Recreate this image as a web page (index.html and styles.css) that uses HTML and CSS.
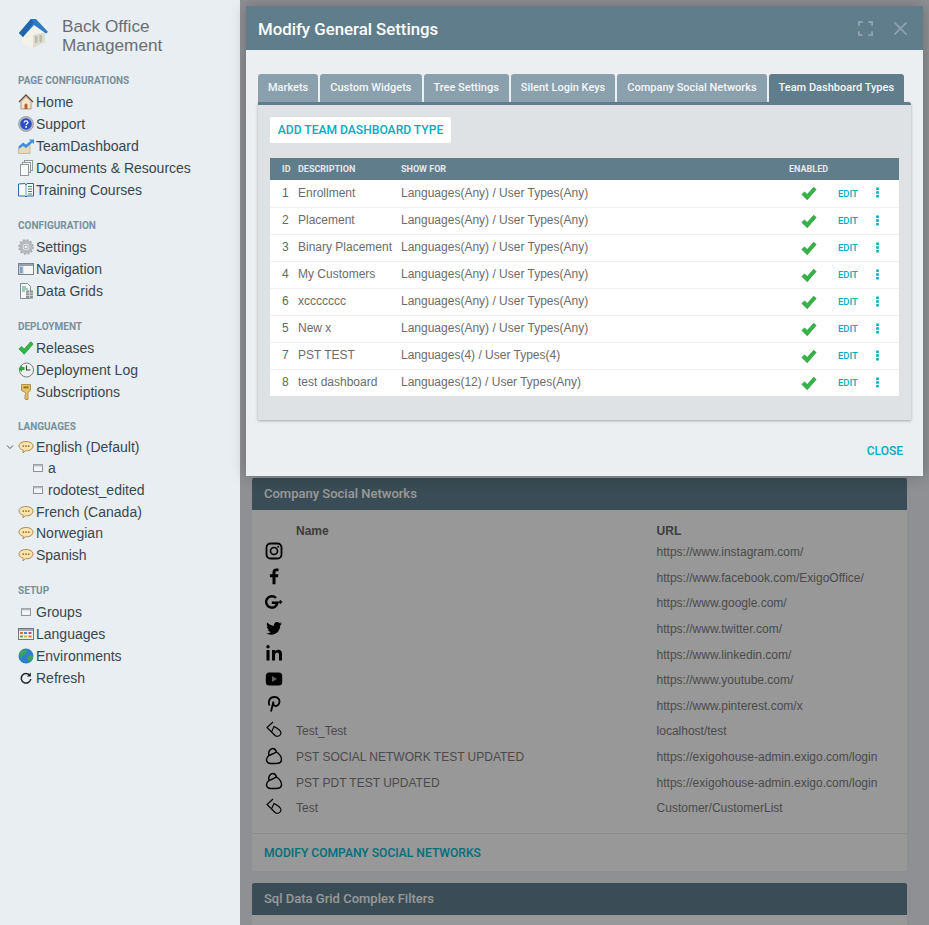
FILE: index.html
```html
<!DOCTYPE html>
<html lang="en">
<head>
<meta charset="utf-8">
<title>Modify General Settings</title>
<link rel="stylesheet" href="styles.css">
</head>
<body>
<svg class="sprite" aria-hidden="true">
  <symbol id="check" viewBox="0 0 18 16"><path d="M1 9 4 6.200l3 3L14.300 1 17 3.500 7 15z" fill="#35b545" stroke="#25963a" stroke-width=".8"/></symbol>
  <symbol id="dots" viewBox="0 0 3 11"><rect x=".2" y=".5" width="2.600" height="2.600" fill="#00acc1"/><rect x=".2" y="4.200" width="2.600" height="2.600" fill="#00acc1"/><rect x=".2" y="7.900" width="2.600" height="2.600" fill="#00acc1"/></symbol>
  <symbol id="bubble" viewBox="0 0 16 16"><path d="M8 2.500c4 0 7 1.900 7 4.600S12 11.800 8.500 11.800c-.4 0-.8 0-1.200-.1L5 14l.2-2.800C2.800 10.500 1 9 1 7.100 1 4.400 4 2.500 8 2.500z" fill="#fbe3ae" stroke="#b08a4a"/><circle cx="5.300" cy="7.100" r=".9" fill="#8b6a30"/><circle cx="8" cy="7.100" r=".9" fill="#8b6a30"/><circle cx="10.700" cy="7.100" r=".9" fill="#8b6a30"/></symbol>
  <symbol id="box" viewBox="0 0 10 10"><rect x=".5" y="1.500" width="9" height="7" fill="#f3f4f5" stroke="#8d9296"/><rect x=".5" y="1.500" width="9" height="1.800" fill="#b4b8bb"/></symbol>
  <symbol id="clip" viewBox="0 0 18 18"><path d="M8 1 2 6.500l8 8c2 1.500 6 .5 6-2.500C16 10 12 7 9 5.500L6.500 11" fill="none" stroke="#000" stroke-width="1.100"/></symbol>
  <symbol id="cloud" viewBox="0 0 18 18"><path d="M4 8.500C3 5 5 1.500 7.800 1.500c2 0 3.200 1.800 3.600 3.500 2.800 1.800 5.100 4.500 5.100 7.500 0 3-2.500 4-5.500 4H6C3 16.500 1.500 15 1.500 12.800c0-1.800 1-3.300 2.500-4.300zm0 0c2.500-1 5-2 7.400-3.500" fill="none" stroke="#000" stroke-width="1.400"/></symbol>
</svg>

<aside class="sidebar">
  <div class="brand">
    <svg class="brand-logo" viewBox="0 0 30 30"><path d="M3 15 14 5l12 9v10l-12 6-11-5z" fill="#f3f2e8"/><path d="M14 30l12-6V14l-12 3z" fill="#dddccf"/><rect x="16" y="18" width="2.500" height="7" fill="#b9b9ac"/><rect x="20.500" y="17" width="2.500" height="7" fill="#b9b9ac"/><path d="M0 15 12 1h5l12 13-2 1.500L15 7 4 19z" fill="#2b7cc4"/><path d="M0 15 12 1l3 3L4 19z" fill="#1f66ab"/></svg>
    <div class="brand-name">Back Office<br>Management</div>
  </div>

  <section class="nav-group">
    <h2 class="nav-label">PAGE CONFIGURATIONS</h2>
    <div class="nav-item"><svg class="nav-icon" viewBox="0 0 16 16"><path d="M1 8 8 1l7 7" fill="none" stroke="#6b4a34" stroke-width="1.300"/><path d="M3 7.500 8 2.500l5 5V15H3z" fill="#f6e3cb" stroke="#8d765f" stroke-width=".7"/><path d="M6.500 15v-4a1.500 1.500 0 0 1 3 0v4z" fill="#b3622b"/></svg>Home</div>
    <div class="nav-item"><svg class="nav-icon" viewBox="0 0 16 16"><circle cx="8" cy="8" r="7.500" fill="#b7bcc2" stroke="#7d838a" stroke-width=".6"/><circle cx="8" cy="8" r="5.800" fill="#2a4fc4"/><path d="M6.200 6.500c0-1 .8-1.600 1.800-1.600s1.900.6 1.900 1.600c0 1.300-1.800 1.400-1.800 2.700" fill="none" stroke="#fff" stroke-width="1.300"/><circle cx="8.100" cy="11" r=".9" fill="#fff"/></svg>Support</div>
    <div class="nav-item"><svg class="nav-icon" viewBox="0 0 16 16"><path d="M.5 11 5 7l3 2 4-3v9.500H.5z" fill="#e7d9bc" stroke="#a8946f" stroke-width=".5"/><path d="M.5 11V8.500L5 4.500l3 2L12.500 3 11 1.500h5V6l-1.500-1.500L8 10 5 8z" fill="#3f8fdc"/></svg>TeamDashboard</div>
    <div class="nav-item"><svg class="nav-icon" viewBox="0 0 16 16"><rect x="6.500" y=".5" width="8" height="10" fill="#f4f6f6" stroke="#8e9a9a"/><rect x="4.500" y="2.500" width="8" height="10" fill="#f4f6f6" stroke="#8e9a9a"/><rect x="2.500" y="4.500" width="8" height="11" fill="#fafbfb" stroke="#8e9a9a"/></svg>Documents &amp; Resources</div>
    <div class="nav-item"><svg class="nav-icon" viewBox="0 0 16 16"><path d="M.5 2 7 1.500 8 3l1-1.500h6.500V14H9l-1 1-1-1H.5z" fill="#f7fafc" stroke="#2a68a8"/><path d="M8 3v11" stroke="#6ea0c8"/><path d="M10 4.500h4M10 7h4M10 9.500h4M10 12h4" stroke="#3c8a58"/></svg>Training Courses</div>
  </section>

  <section class="nav-group">
    <h2 class="nav-label">CONFIGURATION</h2>
    <div class="nav-item"><svg class="nav-icon" viewBox="0 0 16 16"><circle cx="8" cy="8" r="5" fill="none" stroke="#b8bbbd" stroke-width="3.600"/><circle cx="8" cy="8" r="7" fill="none" stroke="#a8abad" stroke-width="1.600" stroke-dasharray="2 1.700"/><circle cx="8" cy="8" r="2" fill="#f2f2f2" stroke="#777" stroke-width=".6"/></svg>Settings</div>
    <div class="nav-item"><svg class="nav-icon" viewBox="0 0 16 16"><rect x=".5" y="2.500" width="15" height="11" fill="#f4f4f4" stroke="#7c8288"/><rect x="1" y="3" width="14" height="2" fill="#9aa1a8"/><rect x="1" y="5" width="4.500" height="8" fill="#bcd0e6"/><path d="M2 7h2.500M2 9h2.500M2 11h2.500" stroke="#466f9c"/></svg>Navigation</div>
    <div class="nav-item"><svg class="nav-icon" viewBox="0 0 16 16"><path d="M2.500.5h7l3 3v12h-10z" fill="#f6f8f8" stroke="#7d9090"/><path d="M4 4h4M4 6h6M4 8h3" stroke="#4e9a7a"/><rect x="8" y="7.500" width="7" height="8" fill="#8c9296"/><path d="M8 10h7M8 12.500h7M11.500 7.500v8" stroke="#e6e8e8" stroke-width=".7"/></svg>Data Grids</div>
  </section>

  <section class="nav-group">
    <h2 class="nav-label">DEPLOYMENT</h2>
    <div class="nav-item"><svg class="nav-icon"><use href="#check"/></svg>Releases</div>
    <div class="nav-item"><svg class="nav-icon" viewBox="0 0 16 16"><circle cx="8.500" cy="8" r="7" fill="#eef0ee" stroke="#777d80"/><path d="M8.500 3.500V8h4" fill="none" stroke="#444" stroke-width="1.100"/><path d="M.5 7 4 3v2h2.500v3H4v2z" fill="#2fa83e"/></svg>Deployment Log</div>
    <div class="nav-item"><svg class="nav-icon" viewBox="0 0 16 16"><path d="M3.500.5h9v6l-2.500 2v7H7.500l-1-1.500 1-1-1-1 1-1V8.500l-4-2z" fill="#e6bf62" stroke="#a5842e" stroke-width=".8"/><rect x="5.500" y="2.500" width="5" height="1.800" fill="#8d6f24"/></svg>Subscriptions</div>
  </section>

  <section class="nav-group nav-tree">
    <h2 class="nav-label">LANGUAGES</h2>
    <div class="nav-item"><svg class="chevron" viewBox="0 0 8 6"><path d="M1 1.500 4 4.500l3-3" fill="none" stroke="#555" stroke-width="1"/></svg><svg class="nav-icon"><use href="#bubble"/></svg>English (Default)</div>
    <div class="nav-item nav-sub"><svg class="sub-icon"><use href="#box"/></svg>a</div>
    <div class="nav-item nav-sub"><svg class="sub-icon"><use href="#box"/></svg>rodotest_edited</div>
    <div class="nav-item"><svg class="nav-icon"><use href="#bubble"/></svg>French (Canada)</div>
    <div class="nav-item"><svg class="nav-icon"><use href="#bubble"/></svg>Norwegian</div>
    <div class="nav-item"><svg class="nav-icon"><use href="#bubble"/></svg>Spanish</div>
  </section>

  <section class="nav-group">
    <h2 class="nav-label">SETUP</h2>
    <div class="nav-item"><svg class="nav-icon groups-icon"><use href="#box"/></svg>Groups</div>
    <div class="nav-item"><svg class="nav-icon" viewBox="0 0 16 16"><rect x=".5" y="2.500" width="15" height="11" fill="#f2f0ea" stroke="#70767c"/><rect x="1" y="3" width="14" height="2" fill="#a5aab0"/><rect x="2" y="6" width="3" height="2" fill="#d9773a"/><rect x="6" y="6" width="3" height="2" fill="#4a86c8"/><rect x="10.500" y="6" width="3" height="2" fill="#c84a8e"/><rect x="2" y="9.500" width="3" height="2" fill="#5fa84a"/><rect x="6" y="9.500" width="3" height="2" fill="#d8b83a"/><rect x="10.500" y="9.500" width="3" height="2" fill="#d9773a"/></svg>Languages</div>
    <div class="nav-item"><svg class="nav-icon" viewBox="0 0 16 16"><circle cx="8" cy="8" r="7.500" fill="#2c7fc8"/><path d="M3 3c2-1 5-1.500 6 0s-1 2-2 3-3 1-3 3-2 0-2.500-1S2 4 3 3zM10 8c2-1 4-1 5 0 0 3-2 5-4 6-1-2-2-4-1-6z" fill="#3fa45a"/></svg>Environments</div>
    <div class="nav-item"><svg class="nav-icon" viewBox="0 0 16 16"><path d="M12 5.500A4.800 4.800 0 1 0 12.800 9" fill="none" stroke="#222" stroke-width="1.500"/><path d="M12.800 2.500v4h-4z" fill="#222"/></svg>Refresh</div>
  </section>
</aside>

<main class="content">
  <article class="card">
    <h3 class="card-title">Company Social Networks</h3>
    <div class="card-body">
      <table class="social">
        <thead><tr><th class="social-icon-cell"></th><th class="social-name">Name</th><th>URL</th></tr></thead>
        <tbody>
          <tr><td class="social-icon-cell"><svg class="social-icon" viewBox="0 0 18 18"><rect x="1.500" y="1.500" width="15" height="15" rx="4" fill="none" stroke="#000" stroke-width="1.800"/><circle cx="9" cy="9" r="3.500" fill="none" stroke="#000" stroke-width="1.600"/><circle cx="13.200" cy="4.800" r="1" fill="#000"/></svg></td><td></td><td>https://www.instagram.com/</td></tr>
          <tr><td class="social-icon-cell"><svg class="social-icon" viewBox="0 0 24 24"><path d="M14 23V13.500h3.300l.5-3.800H14V7.300c0-1.100.4-1.800 1.900-1.800H18V2.100c-.4 0-1.600-.1-3-.1-3 0-5 1.800-5 5.100v2.600H6.600v3.800H10V23z"/></svg></td><td></td><td>https://www.facebook.com/ExigoOffice/</td></tr>
          <tr><td class="social-icon-cell"><svg class="social-icon" viewBox="0 0 18 18"><path d="M11 5A5.700 5.700 0 1 0 12.500 9.800H6.800" fill="none" stroke="#000" stroke-width="2.400"/><path d="M15.500 7.300v3.400M13.800 9h3.400" stroke="#000" stroke-width="1.500"/></svg></td><td></td><td>https://www.google.com/</td></tr>
          <tr><td class="social-icon-cell"><svg class="social-icon" viewBox="0 0 24 24"><path d="M22.460,6C21.690,6.350 20.860,6.580 20,6.690C20.880,6.160 21.560,5.320 21.880,4.310C21.050,4.810 20.130,5.160 19.160,5.360C18.370,4.500 17.260,4 16,4C13.650,4 11.730,5.920 11.730,8.290C11.730,8.630 11.770,8.960 11.840,9.270C8.280,9.090 5.110,7.380 3,4.790C2.630,5.420 2.420,6.160 2.420,6.940C2.420,8.430 3.170,9.750 4.330,10.500C3.620,10.500 2.960,10.300 2.380,10C2.380,10 2.380,10 2.380,10.030C2.380,12.110 3.860,13.850 5.820,14.240C5.460,14.340 5.080,14.390 4.690,14.390C4.420,14.390 4.150,14.360 3.890,14.310C4.430,16 6,17.260 7.890,17.290C6.430,18.450 4.580,19.130 2.560,19.130C2.220,19.130 1.880,19.110 1.540,19.070C3.440,20.290 5.700,21 8.120,21C16,21 20.330,14.460 20.330,8.790C20.330,8.600 20.330,8.420 20.320,8.230C21.160,7.630 21.880,6.870 22.460,6Z"/></svg></td><td></td><td>https://www.twitter.com/</td></tr>
          <tr><td class="social-icon-cell"><svg class="social-icon" viewBox="0 0 18 18"><circle cx="3" cy="2.800" r="1.700"/><rect x="1.500" y="6" width="3" height="10.500"/><path d="M7 6h2.900v1.500C10.500 6.500 11.700 5.800 13.200 5.800c2.900 0 3.800 1.800 3.800 4.600v6.100h-3v-5.600c0-1.400-.4-2.300-1.700-2.300S10 9.600 10 11v5.500H7z"/></svg></td><td></td><td>https://www.linkedin.com/</td></tr>
          <tr><td class="social-icon-cell"><svg class="social-icon" viewBox="0 0 18 18"><rect x=".8" y="2.500" width="16.400" height="13" rx="3.500"/><path d="M7 6v6l5-3z" fill="#989898"/></svg></td><td></td><td>https://www.youtube.com/</td></tr>
          <tr><td class="social-icon-cell"><svg class="social-icon" viewBox="0 0 18 18"><path d="M4.500 10.500C3 8 3.500 2 9.500 2c3.800 0 5.200 2.500 5 4.800-.2 2.500-2 4.500-4.200 4.200-1.500-.2-2.300-1.500-1.900-3.500M8.500 6.500 6 16.500" fill="none" stroke="#000" stroke-width="1.800"/></svg></td><td></td><td>https://www.pinterest.com/x</td></tr>
          <tr><td class="social-icon-cell"><svg class="social-icon"><use href="#clip"/></svg></td><td>Test_Test</td><td>localhost/test</td></tr>
          <tr><td class="social-icon-cell"><svg class="social-icon"><use href="#cloud"/></svg></td><td>PST SOCIAL NETWORK TEST UPDATED</td><td>https://exigohouse-admin.exigo.com/login</td></tr>
          <tr><td class="social-icon-cell"><svg class="social-icon"><use href="#cloud"/></svg></td><td>PST PDT TEST UPDATED</td><td>https://exigohouse-admin.exigo.com/login</td></tr>
          <tr><td class="social-icon-cell"><svg class="social-icon"><use href="#clip"/></svg></td><td>Test</td><td>Customer/CustomerList</td></tr>
        </tbody>
      </table>
    </div>
    <div class="card-footer">MODIFY COMPANY SOCIAL NETWORKS</div>
  </article>
  <article class="card">
    <h3 class="card-title">Sql Data Grid Complex Filters</h3>
    <div class="card-body card-body-tail"></div>
  </article>
</main>

<div class="backdrop"></div>

<div class="modal">
  <header class="modal-head">
    <h1 class="modal-title">Modify General Settings</h1>
    <svg class="modal-tool" viewBox="0 0 16 16"><path d="M1 5V1h4M11 1h4v4M15 11v4h-4M5 15H1v-4" fill="none" stroke="#8ea3ae" stroke-width="2"/></svg>
    <svg class="modal-tool modal-close" viewBox="0 0 16 16"><path d="M1.500 1.500l13 13M14.500 1.500l-13 13" fill="none" stroke="#8ea3ae" stroke-width="1.800"/></svg>
  </header>
  <div class="modal-body">
    <nav class="tabs">
      <div class="tab">Markets</div>
      <div class="tab">Custom Widgets</div>
      <div class="tab">Tree Settings</div>
      <div class="tab">Silent Login Keys</div>
      <div class="tab">Company Social Networks</div>
      <div class="tab tab-active">Team Dashboard Types</div>
    </nav>
    <div class="panel">
      <div class="add-btn">ADD TEAM DASHBOARD TYPE</div>
      <table class="grid">
        <thead><tr><th class="col-id">ID</th><th class="col-desc">DESCRIPTION</th><th class="col-show">SHOW FOR</th><th class="col-enabled">ENABLED</th><th class="col-edit"></th><th class="col-more"></th></tr></thead>
        <tbody>
          <tr><td class="col-id">1</td><td>Enrollment</td><td>Languages(Any) / User Types(Any)</td><td class="col-enabled"><svg class="check"><use href="#check"/></svg></td><td class="col-edit">EDIT</td><td class="col-more"><svg class="dots"><use href="#dots"/></svg></td></tr>
          <tr><td class="col-id">2</td><td>Placement</td><td>Languages(Any) / User Types(Any)</td><td class="col-enabled"><svg class="check"><use href="#check"/></svg></td><td class="col-edit">EDIT</td><td class="col-more"><svg class="dots"><use href="#dots"/></svg></td></tr>
          <tr><td class="col-id">3</td><td>Binary Placement</td><td>Languages(Any) / User Types(Any)</td><td class="col-enabled"><svg class="check"><use href="#check"/></svg></td><td class="col-edit">EDIT</td><td class="col-more"><svg class="dots"><use href="#dots"/></svg></td></tr>
          <tr><td class="col-id">4</td><td>My Customers</td><td>Languages(Any) / User Types(Any)</td><td class="col-enabled"><svg class="check"><use href="#check"/></svg></td><td class="col-edit">EDIT</td><td class="col-more"><svg class="dots"><use href="#dots"/></svg></td></tr>
          <tr><td class="col-id">6</td><td>xccccccc</td><td>Languages(Any) / User Types(Any)</td><td class="col-enabled"><svg class="check"><use href="#check"/></svg></td><td class="col-edit">EDIT</td><td class="col-more"><svg class="dots"><use href="#dots"/></svg></td></tr>
          <tr><td class="col-id">5</td><td>New x</td><td>Languages(Any) / User Types(Any)</td><td class="col-enabled"><svg class="check"><use href="#check"/></svg></td><td class="col-edit">EDIT</td><td class="col-more"><svg class="dots"><use href="#dots"/></svg></td></tr>
          <tr><td class="col-id">7</td><td>PST TEST</td><td>Languages(4) / User Types(4)</td><td class="col-enabled"><svg class="check"><use href="#check"/></svg></td><td class="col-edit">EDIT</td><td class="col-more"><svg class="dots"><use href="#dots"/></svg></td></tr>
          <tr><td class="col-id">8</td><td>test dashboard</td><td>Languages(12) / User Types(Any)</td><td class="col-enabled"><svg class="check"><use href="#check"/></svg></td><td class="col-edit">EDIT</td><td class="col-more"><svg class="dots"><use href="#dots"/></svg></td></tr>
        </tbody>
      </table>
    </div>
    <div class="modal-foot"><span class="close-link">CLOSE</span></div>
  </div>
</div>
</body>
</html>
```
FILE: styles.css
```css
* { box-sizing: border-box; }
html, body { height: 100%; }
body {
  margin: 0;
  display: flex;
  height: 925px;
  overflow: hidden;
  background: #dee1e6;
  font-family: "Liberation Sans", Arial, sans-serif;
  color: #37474f;
}
.sprite { position: absolute; width: 0; height: 0; }

/* sidebar */
.sidebar {
  width: 240px;
  flex: none;
  height: 925px;
  padding: 17px 0 0 18px;
  background: #e9eef2;
}
.brand { display: flex; align-items: flex-start; height: 44px; margin-bottom: 13px; }
.brand-logo { width: 30px; height: 30px; margin: 1px 13px 0 1px; flex: none; }
.brand-name { font-size: 17.2px; line-height: 19px; color: #6a6e72; }
.nav-group { margin-bottom: 18px; }
.nav-label {
  margin: 0 0 4px;
  font: 700 10px/13px Roboto, sans-serif;
  color: #78909c;
}
.nav-item {
  position: relative;
  display: flex;
  align-items: center;
  height: 22px;
  font-size: 14px;
  color: #37474f;
}
.nav-tree { margin-top: -1px; margin-bottom: 18px; }
.nav-tree .nav-label { margin-bottom: 3px; }
.nav-tree .nav-item { height: 21.6px; }
.nav-icon { width: 16px; height: 16px; margin-right: 2px; flex: none; }
.groups-icon { transform: scale(.62); }
.nav-sub { padding-left: 15px; }
.sub-icon { width: 10px; height: 10px; margin-right: 5px; flex: none; }
.chevron { position: absolute; left: -12px; top: 8px; width: 8px; height: 6px; }

/* page behind the modal */
.content { flex: 1; padding: 478px 22px 0 12px; min-width: 0; }
.card { margin-bottom: 12px; border-radius: 2px; overflow: hidden; background: #eee; }
.card-title {
  margin: 0;
  height: 32px;
  padding: 0 12px;
  font: 500 13px/32px Roboto, sans-serif;
  background: #5c7885;
  color: #eceff1;
}
.card-body { padding: 12.5px 12px 0; height: 324px; border-bottom: 1px solid #dcdcdc; }
.card-body-tail { height: 40px; }
.card-footer {
  padding: 0 12px;
  height: 37px;
  font: 500 12.1px/38px Roboto, sans-serif;
  color: #00acc1;
}
.social { width: 100%; border-collapse: collapse; font-size: 12px; color: #757575; }
.social th { padding: 0; height: 17px; text-align: left; font-size: 12px; color: #616161; }
.social td { padding: 0; height: 25.600px; }
.social-icon-cell { width: 32px; }
.social-name { width: 360.6px; }
.social-icon { display: block; width: 18px; height: 18px; margin: -3px 0 0 1px; }

.backdrop {
  position: absolute;
  left: 240px;
  top: 0;
  right: 0;
  height: 925px;
  background: rgba(0, 0, 0, .36);
}

/* modal */
.modal {
  position: absolute;
  left: 246px;
  top: 6px;
  width: 677px;
  height: 470px;
  background: #ebeff2;
  box-shadow: 0 0 14px rgba(0, 0, 0, .25);
}
.modal-head {
  display: flex;
  align-items: center;
  height: 44px;
  padding: 0 15px 0 12px;
  background: #607d8b;
}
.modal-title { flex: 1; margin: 2px 0 0; font: 500 16.8px/24px Roboto, sans-serif; color: #fff; }
.modal-tool { width: 15px; height: 15px; }
.modal-close { margin-left: 20px; }
.modal-body { padding: 24px 12px 0; }
.tabs { display: flex; gap: 2px; height: 28px; }
.tab {
  padding: 0 10px;
  white-space: nowrap;
  font: 500 11px/27px Roboto, sans-serif;
  color: #f5f7f8;
  background: #8aa0ac;
  border-radius: 3px 3px 0 0;
}
.tab-active { background: #607d8b; }
.panel {
  height: 318px;
  padding: 12px;
  border-top: 3px solid #607d8b;
  border-radius: 0 3px 0 0;
  background: #dee2e5;
  box-shadow: 0 1px 3px rgba(0, 0, 0, .3);
}
.add-btn {
  width: 181px;
  height: 26px;
  margin-bottom: 15px;
  text-align: center;
  font: 500 12.1px/26px Roboto, sans-serif;
  color: #00acc1;
  background: #fff;
  border-radius: 2px;
}
.grid { width: 100%; border-collapse: collapse; table-layout: fixed; background: #fff; }
.grid th {
  height: 22px;
  padding: 0;
  text-align: left;
  font: 700 9px/22px Roboto, sans-serif;
  color: #e4e8ea;
  background: #607d8b;
}
.grid td {
  height: 27px;
  padding: 0 0 1px;
  font-size: 12px;
  line-height: 14px;
  color: #6c6c6c;
  border-bottom: 1px solid #eef0f1;
}
.grid tr:last-child td { border-bottom: 0; }
.grid .col-id { width: 28px; padding-left: 12px; }
.grid td.col-id { color: #55705f; }
.col-desc { width: 103px; }
.col-show { width: 388px; }
.col-enabled { width: 49px; }
.grid td.col-enabled { padding: 1px 0 0 12px; }
.check { display: block; width: 16px; height: 15px; }
.col-edit { width: 38px; }
.grid td.col-edit { padding: 1px 0 0; font: 500 9.5px/14px Roboto, sans-serif; color: #00acc1; }
.col-more { width: 23px; }
.dots { display: block; width: 3px; height: 11px; }
.modal-foot { padding: 21px 8px 0 0; text-align: right; }
.close-link { font: 500 12px/14px Roboto, sans-serif; color: #00acc1; }
```
